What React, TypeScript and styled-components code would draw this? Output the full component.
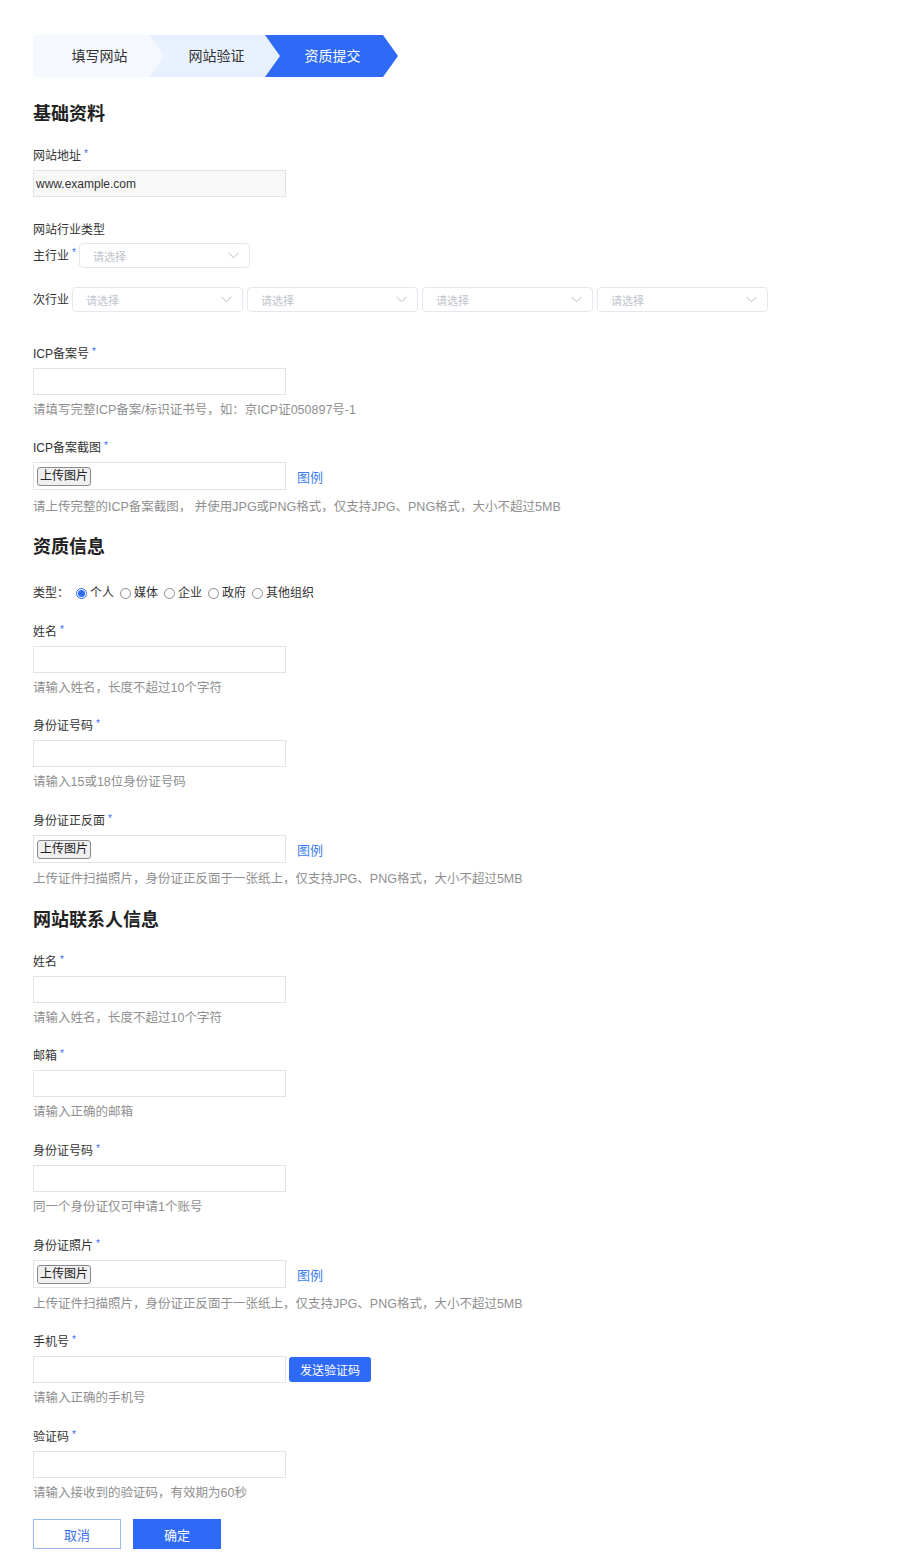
import React from 'react';
import styled, { createGlobalStyle } from 'styled-components';

const GlobalStyle = createGlobalStyle`
  html, body {
    margin: 0;
    padding: 0;
    background: #fff;
  }
  body {
    font-family: "Liberation Sans", "Noto Sans CJK SC", sans-serif;
    color: #333;
    font-size: 12px;
  }
  * { box-sizing: border-box; }
`;

const FONT = `"Liberation Sans", "Noto Sans CJK SC", sans-serif`;

const Page = styled.div`
  padding: 35px 33px 12px;
`;

const Steps = styled.div`
  display: flex;
  height: 42px;
`;

const Step = styled.div<{ $first?: boolean; $active?: boolean; $bg: string }>`
  width: 133px;
  height: 42px;
  margin-left: ${(p) => (p.$first ? '0' : '-17px')};
  background: ${(p) => p.$bg};
  color: ${(p) => (p.$active ? '#fff' : '#333')};
  font-size: 14px;
  line-height: 42px;
  text-align: center;
  border-radius: ${(p) => (p.$first ? '3px 0 0 3px' : '0')};
  clip-path: ${(p) =>
    p.$first
      ? 'polygon(0 0, calc(100% - 15px) 0, 100% 50%, calc(100% - 15px) 100%, 0 100%)'
      : 'polygon(0 0, calc(100% - 15px) 0, 100% 50%, calc(100% - 15px) 100%, 0 100%, 15px 50%)'};
  padding-left: ${(p) => (p.$first ? '0' : '2px')};
`;

const Heading = styled.h2<{ $top: number; $shift?: number }>`
  margin: ${(p) => p.$top}px 0 0;
  height: 24px;
  padding-top: ${(p) => p.$shift ?? 1}px;
  font-size: 18px;
  line-height: 24px;
  font-weight: bold;
  color: #222;
`;

const Field = styled.div<{ $top: number }>`
  margin-top: ${(p) => p.$top}px;
`;

const Label = styled.div`
  display: flex;
  align-items: center;
  height: 18px;
  font-size: 12px;
  line-height: 18px;
  color: #333;
  white-space: nowrap;
`;

const FieldLabel = styled(Label)`
  padding-top: 3px;
`;

const Req = styled.span`
  align-self: flex-start;
  color: #3a6df0;
  font-size: 10px;
  line-height: 10px;
  margin-left: 3px;
  margin-top: 1px;
`;

const TextInput = styled.input<{ $filled?: boolean; $inline?: boolean }>`
  display: block;
  margin-top: ${(p) => (p.$inline ? '0' : '7px')};
  width: 253px;
  height: 27px;
  border: 1px solid #e3e3e3;
  background: ${(p) => (p.$filled ? '#f8f8f8' : '#fff')};
  padding: 0 2px;
  font-family: ${FONT};
  font-size: 12px;
  color: #333;
  outline: none;
`;

const Hint = styled.div<{ $gap?: number }>`
  margin-top: ${(p) => p.$gap ?? 4}px;
  height: 18px;
  padding-top: 2px;
  font-size: 12.5px;
  line-height: 18px;
  color: #8f8f8f;
  white-space: nowrap;
`;

const InlineRow = styled.div<{ $top: number }>`
  display: flex;
  align-items: center;
  margin-top: ${(p) => p.$top}px;
`;

const Row = styled.div`
  display: flex;
  align-items: center;
  margin-top: 7px;
`;

const SelectBox = styled.div<{ $ml: number }>`
  width: 171px;
  height: 25px;
  margin-left: ${(p) => p.$ml}px;
  border: 1px solid #e4e7ed;
  border-radius: 4px;
  display: flex;
  align-items: center;
  justify-content: space-between;
  padding: 0 10px 0 13px;
  color: #c0c4cc;
  font-size: 11px;
`;

const UploadBox = styled.div`
  width: 253px;
  height: 28px;
  border: 1px solid #e3e3e3;
  display: flex;
  align-items: center;
  padding-left: 3px;
`;

const UploadButton = styled.button`
  height: 19px;
  padding: 0 2px;
  border: 1px solid #8a8a8a;
  border-radius: 3px;
  background: #efefef;
  font-family: ${FONT};
  font-size: 12px;
  color: #222;
  line-height: 17px;
`;

const SampleLink = styled.a`
  margin-left: 11px;
  color: #3d7ef5;
  font-size: 13px;
  text-decoration: none;
`;

const RadioGroup = styled.div`
  display: flex;
  align-items: center;
  height: 18px;
  padding-top: 2px;
  margin-top: 26px;
  line-height: 18px;
  font-size: 12px;
`;

const RadioLabel = styled.span`
  width: 43px;
`;

const RadioItem = styled.label`
  display: flex;
  align-items: center;
  margin-right: 6px;
`;

const RadioDot = styled.span<{ $on?: boolean }>`
  width: 11px;
  height: 11px;
  border-radius: 50%;
  border: 1px solid ${(p) => (p.$on ? '#2e6af6' : '#8a8a8a')};
  margin-right: 3px;
  display: flex;
  align-items: center;
  justify-content: center;
  &::after {
    content: '';
    width: 7px;
    height: 7px;
    border-radius: 50%;
    background: ${(p) => (p.$on ? '#2e6af6' : 'transparent')};
  }
`;

const SendButton = styled.button`
  margin-left: 3px;
  width: 82px;
  height: 25px;
  border: none;
  border-radius: 3px;
  background: #2e6af6;
  color: #fff;
  font-family: ${FONT};
  font-size: 12px;
`;

const Actions = styled.div`
  display: flex;
  gap: 12px;
  margin-top: 19px;
`;

const ActionButton = styled.button<{ $primary?: boolean }>`
  width: 88px;
  height: 30px;
  border: 1px solid ${(p) => (p.$primary ? '#2e6af6' : '#9ab8f8')};
  background: ${(p) => (p.$primary ? '#2e6af6' : '#fff')};
  color: ${(p) => (p.$primary ? '#fff' : '#3a6df0')};
  font-family: ${FONT};
  font-size: 13px;
`;

const Chevron = () => (
  <svg width="11" height="7" viewBox="0 0 11 7" fill="none">
    <path d="M0.5 0.8 L5.5 5.8 L10.5 0.8" stroke="#b8bcc6" strokeWidth="1" />
  </svg>
);

function Select({ ml }: { ml: number }) {
  return (
    <SelectBox $ml={ml}>
      <span>请选择</span>
      <Chevron />
    </SelectBox>
  );
}

function InputField({ top, label, hint }: { top: number; label: string; hint: string }) {
  return (
    <Field $top={top}>
      <FieldLabel>
        {label}
        <Req>*</Req>
      </FieldLabel>
      <TextInput />
      <Hint>{hint}</Hint>
    </Field>
  );
}

function UploadField({
  top,
  label,
  hint,
  hintGap = 5,
}: {
  top: number;
  label: string;
  hint: string;
  hintGap?: number;
}) {
  return (
    <Field $top={top}>
      <FieldLabel>
        {label}
        <Req>*</Req>
      </FieldLabel>
      <Row>
        <UploadBox>
          <UploadButton type="button">上传图片</UploadButton>
        </UploadBox>
        <SampleLink href="#">图例</SampleLink>
      </Row>
      <Hint $gap={hintGap}>{hint}</Hint>
    </Field>
  );
}

const uploadHint = '上传证件扫描照片，身份证正反面于一张纸上，仅支持JPG、PNG格式，大小不超过5MB';

export default function App() {
  const types = ['个人', '媒体', '企业', '政府', '其他组织'];
  return (
    <>
      <GlobalStyle />
      <Page>
        <Steps>
          <Step $first $bg="#f5f8ff">填写网站</Step>
          <Step $bg="#e9f0fe">网站验证</Step>
          <Step $active $bg="#2e6af6">资质提交</Step>
        </Steps>

        <Heading $top={24}>基础资料</Heading>

        <Field $top={20}>
          <FieldLabel>
            网站地址<Req>*</Req>
          </FieldLabel>
          <TextInput $filled defaultValue="www.example.com" />
        </Field>

        <Field $top={22}>
          <FieldLabel>网站行业类型</FieldLabel>
        </Field>
        <InlineRow $top={6}>
          <Label>
            主行业<Req>*</Req>
          </Label>
          <Select ml={3} />
        </InlineRow>
        <InlineRow $top={19}>
          <Label>次行业</Label>
          <Select ml={3} />
          <Select ml={4} />
          <Select ml={4} />
          <Select ml={4} />
        </InlineRow>

        <InputField top={31} label="ICP备案号" hint="请填写完整ICP备案/标识证书号，如：京ICP证050897号-1" />
        <UploadField
          top={20}
          label="ICP备案截图"
          hintGap={6}
          hint="请上传完整的ICP备案截图， 并使用JPG或PNG格式，仅支持JPG、PNG格式，大小不超过5MB"
        />

        <Heading $top={19} $shift={2}>资质信息</Heading>
        <RadioGroup>
          <RadioLabel>类型：</RadioLabel>
          {types.map((t, i) => (
            <RadioItem key={t}>
              <RadioDot $on={i === 0} />
              {t}
            </RadioItem>
          ))}
        </RadioGroup>

        <InputField top={20} label="姓名" hint="请输入姓名，长度不超过10个字符" />
        <InputField top={20} label="身份证号码" hint="请输入15或18位身份证号码" />
        <UploadField top={21} label="身份证正反面" hint={uploadHint} />

        <Heading $top={20} $shift={2}>网站联系人信息</Heading>

        <InputField top={21} label="姓名" hint="请输入姓名，长度不超过10个字符" />
        <InputField top={20} label="邮箱" hint="请输入正确的邮箱" />
        <InputField top={21} label="身份证号码" hint="同一个身份证仅可申请1个账号" />
        <UploadField top={21} label="身份证照片" hint={uploadHint} />

        <Field $top={20}>
          <FieldLabel>
            手机号<Req>*</Req>
          </FieldLabel>
          <Row>
            <TextInput $inline />
            <SendButton type="button">发送验证码</SendButton>
          </Row>
          <Hint>请输入正确的手机号</Hint>
        </Field>

        <InputField top={21} label="验证码" hint="请输入接收到的验证码，有效期为60秒" />

        <Actions>
          <ActionButton type="button">取消</ActionButton>
          <ActionButton type="button" $primary>
            确定
          </ActionButton>
        </Actions>
      </Page>
    </>
  );
}
